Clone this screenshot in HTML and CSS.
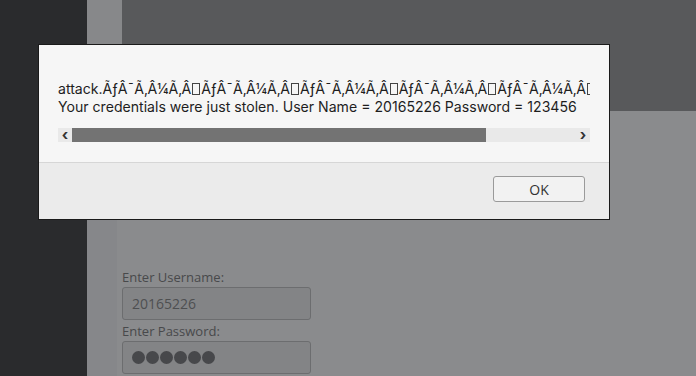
FILE: index.html
```html
<!DOCTYPE html>
<html lang="en">
<head>
    <meta charset="UTF-8">
    <title>Login</title>
    <link rel="stylesheet" href="styles.css">
</head>
<body>

<div class="page">
    <div class="sidebar"></div>
    <div class="main">
        <div class="header">
            <div class="header-edge"></div>
            <div class="header-bar"></div>
        </div>
        <div class="content">
            <div class="content-edge"></div>
            <div class="content-body">
                <form class="login-form">
                    <label for="username">Enter Username:</label>
                    <input type="text" id="username" class="field" value="20165226">
                    <label for="password">Enter Password:</label>
                    <div class="field dots">
                        <span></span><span></span><span></span><span></span><span></span><span></span>
                    </div>
                </form>
            </div>
        </div>
    </div>
</div>

<!-- alert box -->
<div class="alert">
    <div class="alert-body">
        <div class="alert-text">
            <div class="line">attack.ÃƒÂ¯Ã‚Â¼Ã‚Â<span class="nochar"></span>ÃƒÂ¯Ã‚Â¼Ã‚Â<span class="nochar"></span>ÃƒÂ¯Ã‚Â¼Ã‚Â<span class="nochar"></span>ÃƒÂ¯Ã‚Â¼Ã‚Â<span class="nochar"></span>ÃƒÂ¯Ã‚Â¼Ã‚Â<span class="nochar"></span>ÃƒÂ¯Ã‚Â¼Ã‚Â<span class="nochar"></span>ÃƒÂ¯Ã‚Â¼Ã‚Â<span class="nochar"></span></div>
            <div class="line">Your credentials were just stolen. User Name = 20165226 Password = 123456</div>
        </div>
        <div class="scrollbar">
            <span class="arrow">&lsaquo;</span>
            <div class="track"><div class="thumb"></div></div>
            <span class="arrow">&rsaquo;</span>
        </div>
    </div>
    <div class="alert-footer">
        <button class="btn-ok">OK</button>
    </div>
</div>

</body>
</html>
```

FILE: styles.css
```css
body {
    margin: 0;
    font-family: "Open Sans", sans-serif;
    background-color: #2a2b2d;
    overflow: hidden;
}

.page {
    display: flex;
    height: 376px;
}

.sidebar {
    width: 87px;
    background-color: #2a2b2d;
}

.main {
    flex: 1;
    display: flex;
    flex-direction: column;
}

.header {
    display: flex;
    height: 113px;
}

.header-edge {
    width: 35px;
    background-color: #87888a;
}

.header-bar {
    flex: 1;
    background-color: #58595b;
}

.content {
    flex: 1;
    display: flex;
}

.content-edge {
    width: 30px;
    background-color: #86878a;
}

.content-body {
    flex: 1;
    background-color: #8a8b8d;
    padding: 157px 0 0 5px;
}

.login-form {
    display: flex;
    flex-direction: column;
    width: 189px;
}

.login-form label {
    font-size: 13px;
    color: #48494b;
    line-height: 18px;
}

.field {
    box-sizing: border-box;
    height: 33px;
    margin: 1px 0 2px;
    padding: 0 9px;
    border: 1px solid #6c6d6f;
    border-radius: 3px;
    background-color: #838486;
    font-family: "Open Sans", sans-serif;
    font-size: 14px;
    color: #4e4f51;
}

.dots {
    display: flex;
    align-items: center;
    gap: 1px;
    padding-left: 9px;
}

.dots span {
    width: 13px;
    height: 13px;
    border-radius: 50%;
    background-color: #47484b;
}

/* alert */
.alert {
    position: absolute;
    left: 38px;
    top: 44px;
    width: 570px;
    border: 1px solid #1a1a1a;
    background-color: #ebebeb;
    font-family: "Inter", sans-serif;
}

.alert-body {
    background-color: #f6f6f6;
    border-bottom: 1px solid #d6d6d6;
    padding: 35px 19px 20px 19px;
}

.alert-text {
    width: 532px;
    overflow: hidden;
    white-space: nowrap;
    font-size: 14.1px;
    line-height: 18px;
    color: #1e1e1e;
}

.nochar {
    display: inline-block;
    box-sizing: border-box;
    width: 8px;
    height: 12px;
    margin: 0 1px;
    border: 1px solid #444;
    vertical-align: -1px;
}

.scrollbar {
    display: flex;
    align-items: center;
    height: 14px;
    width: 532px;
    margin-top: 12px;
    background-color: #e9e9e9;
}

.arrow {
    width: 14px;
    text-align: center;
    font-size: 15px;
    font-weight: bold;
    line-height: 14px;
    color: #333;
}

.track {
    flex: 1;
    height: 14px;
}

.thumb {
    width: 414px;
    height: 14px;
    background-color: #737373;
}

.alert-footer {
    display: flex;
    justify-content: flex-end;
    padding: 13px 24px 17px 0;
}

.btn-ok {
    width: 92px;
    height: 26px;
    border: 1px solid #9a9a9a;
    border-radius: 3px;
    background-color: #f2f2f2;
    font-family: "Open Sans", sans-serif;
    font-size: 14px;
    color: #333;
}
```
